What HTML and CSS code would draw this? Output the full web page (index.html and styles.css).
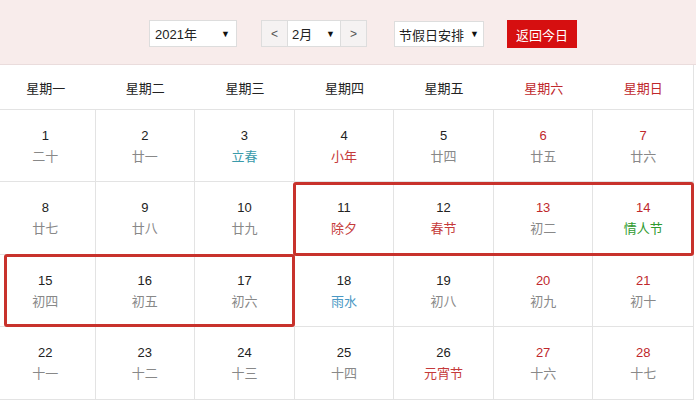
FILE: index.html
```html
<!DOCTYPE html>
<html lang="zh-CN">
<head>
<meta charset="utf-8">
<link rel="stylesheet" href="styles.css">
</head>
<body>
<div class="page">
  <div class="toolbar">
    <div class="select year"><span>2021年</span><span class="arrow">▼</span></div>
    <div class="month-group">
      <div class="nav">&lt;</div>
      <div class="select month"><span>2月</span><span class="arrow">▼</span></div>
      <div class="nav">&gt;</div>
    </div>
    <div class="select holiday"><span>节假日安排</span><span class="arrow">▼</span></div>
    <div class="today">返回今日</div>
  </div>
  <div class="calendar">
    <div class="weekdays">
      <div>星期一</div><div>星期二</div><div>星期三</div><div>星期四</div><div>星期五</div><div class="we">星期六</div><div class="we">星期日</div>
    </div>
    <div class="days">
      <div class="day"><b>1</b><i>二十</i></div>
      <div class="day"><b>2</b><i>廿一</i></div>
      <div class="day"><b>3</b><i class="teal">立春</i></div>
      <div class="day"><b>4</b><i class="red">小年</i></div>
      <div class="day"><b>5</b><i>廿四</i></div>
      <div class="day we"><b>6</b><i>廿五</i></div>
      <div class="day we"><b>7</b><i>廿六</i></div>

      <div class="day"><b>8</b><i>廿七</i></div>
      <div class="day"><b>9</b><i>廿八</i></div>
      <div class="day"><b>10</b><i>廿九</i></div>
      <div class="day"><b>11</b><i class="red">除夕</i></div>
      <div class="day"><b>12</b><i class="red">春节</i></div>
      <div class="day we"><b>13</b><i>初二</i></div>
      <div class="day we"><b>14</b><i class="green">情人节</i></div>

      <div class="day"><b>15</b><i>初四</i></div>
      <div class="day"><b>16</b><i>初五</i></div>
      <div class="day"><b>17</b><i>初六</i></div>
      <div class="day"><b>18</b><i class="blue">雨水</i></div>
      <div class="day"><b>19</b><i>初八</i></div>
      <div class="day we"><b>20</b><i>初九</i></div>
      <div class="day we"><b>21</b><i>初十</i></div>

      <div class="day"><b>22</b><i>十一</i></div>
      <div class="day"><b>23</b><i>十二</i></div>
      <div class="day"><b>24</b><i>十三</i></div>
      <div class="day"><b>25</b><i>十四</i></div>
      <div class="day"><b>26</b><i class="red">元宵节</i></div>
      <div class="day we"><b>27</b><i>十六</i></div>
      <div class="day we"><b>28</b><i>十七</i></div>
    </div>
  </div>
  <div class="mark mark-a"></div>
  <div class="mark mark-b"></div>
</div>
</body>
</html>
```
FILE: styles.css
```css
* { box-sizing: border-box; margin: 0; padding: 0; }
html, body { background: #fff; }
body {
  width: 696px;
  height: 400px;
  overflow: hidden;
  font-family: "Liberation Sans", "Noto Sans CJK SC", sans-serif;
  font-size: 13px;
  color: #333;
}
.page { position: relative; width: 696px; height: 400px; overflow: hidden; }

.toolbar {
  height: 65px;
  background: #f8eceb;
  border-bottom: 1px solid #eadcdc;
  display: flex;
  align-items: flex-start;
  padding: 20px 0 0 149px;
}
.select {
  height: 27px;
  background: #fff;
  border: 1px solid #ddd;
  display: flex;
  align-items: center;
  justify-content: space-between;
  padding: 0 6px 0 5px;
  font-size: 13px;
  color: #222;
}
.arrow { font-size: 9px; color: #111; }
.year { width: 88px; }
.month-group { display: flex; margin-left: 24px; }
.nav {
  width: 27px;
  height: 27px;
  background: #f5f2f2;
  border: 1px solid #ddd;
  display: flex;
  align-items: center;
  justify-content: center;
  color: #555;
  font-size: 12px;
}
.month { width: 52px; border-left: none; border-right: none; padding: 0 5px 0 4px; }
.holiday { width: 90px; margin-left: 27px; padding: 0 4px 0 4px; margin-top: 1px; height: 26px; }
.today {
  margin-left: 23px;
  width: 70px;
  height: 28px;
  background: #d60f10;
  color: #fff;
  display: flex;
  align-items: center;
  justify-content: center;
  font-size: 13px;
}

.calendar {
  margin-left: -4px;
  width: 698px;
  border-right: 1px solid #e3e3e3;
}
.weekdays {
  display: grid;
  grid-template-columns: repeat(7, 1fr);
  height: 45px;
  border-bottom: 1px solid #e3e3e3;
  align-items: center;
  text-align: center;
  color: #222;
}
.weekdays .we { color: #c0282c; }
.days {
  display: grid;
  grid-template-columns: repeat(7, 1fr);
  grid-template-rows: 72px 73px 72px 73px;
}
.day {
  border-right: 1px solid #e3e3e3;
  border-bottom: 1px solid #e3e3e3;
  display: flex;
  flex-direction: column;
  align-items: center;
  padding-top: 15px;
  line-height: 21px;
}
.day:nth-child(7n) { border-right: none; }
.day b { font-weight: normal; color: #222; font-size: 13px; }
.day i { font-style: normal; color: #888; font-size: 13px; }
.day.we b { color: #c0282c; }
.day i.red { color: #c53a3a; }
.day i.teal { color: #3a9aaa; }
.day i.blue { color: #4a98c4; }
.day i.green { color: #2f9a2f; }

.mark {
  position: absolute;
  border: 3px solid #c8322c;
  border-radius: 3px;
}
.mark-a { left: 293px; top: 182px; width: 401px; height: 74px; }
.mark-b { left: 4px; top: 254px; width: 291px; height: 73px; }
```
